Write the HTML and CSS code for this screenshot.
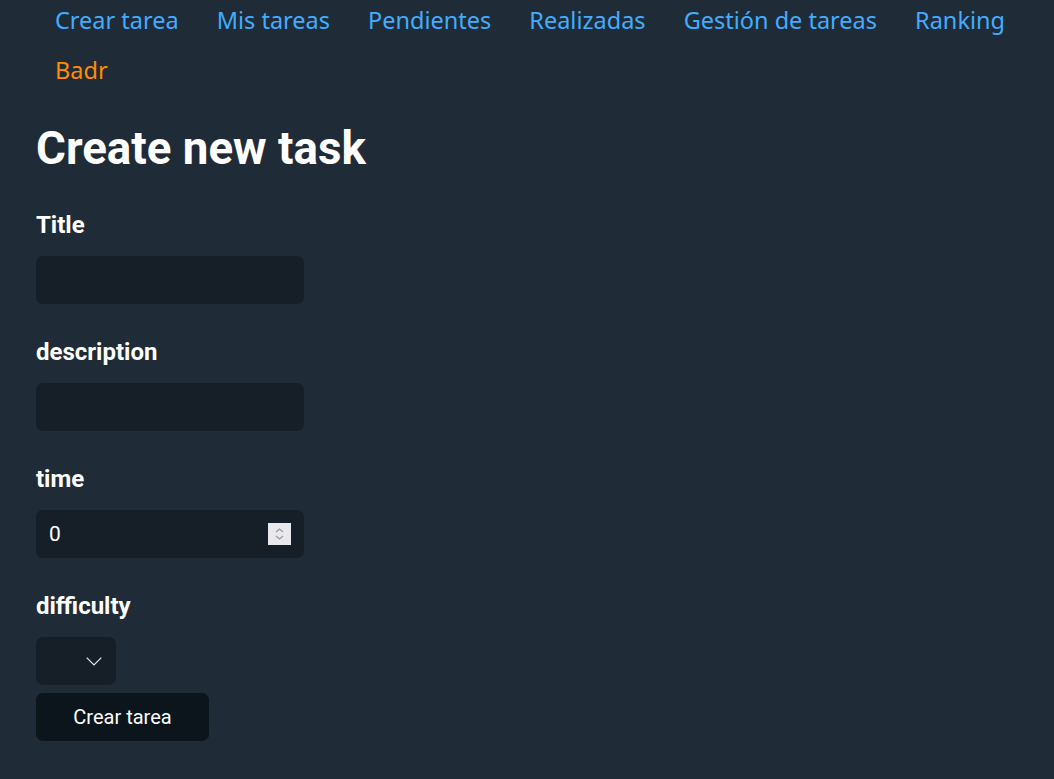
FILE: index.html
```html
<!DOCTYPE html>
<html lang="es">
<head>
<meta charset="utf-8">
<title>Create new task</title>
<link rel="stylesheet" href="styles.css">
</head>
<body>
<nav class="nav">
  <ul class="nav-list">
    <li class="nav-item"><a class="nav-link" href="#">Crear tarea</a></li>
    <li class="nav-item"><a class="nav-link" href="#">Mis tareas</a></li>
    <li class="nav-item"><a class="nav-link" href="#">Pendientes</a></li>
    <li class="nav-item"><a class="nav-link" href="#">Realizadas</a></li>
    <li class="nav-item"><a class="nav-link" href="#">Gestión de tareas</a></li>
    <li class="nav-item"><a class="nav-link" href="#">Ranking</a></li>
    <li class="nav-item"><a class="nav-link nav-user" href="#">Badr</a></li>
  </ul>
</nav>
<main class="main">
  <h1 class="title">Create new task</h1>
  <form class="form">
    <div class="field">
      <label class="label" for="title">Title</label>
      <input class="input" id="title" type="text">
    </div>
    <div class="field">
      <label class="label" for="description">description</label>
      <input class="input" id="description" type="text">
    </div>
    <div class="field">
      <label class="label" for="time">time</label>
      <div class="number-wrap">
        <input class="input input-number" id="time" type="text" value="0">
        <span class="spinner">
          <svg width="23" height="22" viewBox="0 0 23 22" aria-hidden="true">
            <rect width="23" height="22" fill="#e9e9ed"/>
            <path d="M8 9 L11.5 6 L15 9" fill="none" stroke="#9a9aa0" stroke-width="1.3"/>
            <path d="M8 13 L11.5 16 L15 13" fill="none" stroke="#9a9aa0" stroke-width="1.3"/>
          </svg>
        </span>
      </div>
    </div>
    <div class="field">
      <label class="label" for="difficulty">difficulty</label>
      <div class="select-wrap">
        <select class="select" id="difficulty">
          <option></option>
        </select>
        <svg class="chevron" width="16" height="9" viewBox="0 0 16 9" aria-hidden="true">
          <path d="M0.7 0.7 L8 8 L15.3 0.7" fill="none" stroke="#e8e8e8" stroke-width="1.2"/>
        </svg>
      </div>
    </div>
    <button class="button" type="button">Crear tarea</button>
  </form>
</main>
</body>
</html>
```
FILE: styles.css
```css
html, body {
  margin: 0;
  padding: 0;
}
body {
  background: #202b38;
  color: #ffffff;
  font-family: Roboto, "Liberation Sans", sans-serif;
  min-height: 779px;
}
.nav-list {
  list-style: none;
  margin: 0;
  padding: 0 0 0 36px;
  display: flex;
  flex-wrap: wrap;
  row-gap: 10px;
}
.nav-item {
  padding: 0 19px;
  height: 40px;
  line-height: 40px;
  font-family: "Noto Sans", "Open Sans", sans-serif;
  font-size: 23.5px;
}
.nav-link {
  color: #41adff;
  text-decoration: none;
}
.nav-user {
  color: #ff8c00;
}
.main {
  padding: 0 36px;
}
.title {
  margin: 29px 0 0 0;
  font-size: 45.7px;
  line-height: 60px;
  font-weight: 700;
}
.form {
  display: flex;
  flex-direction: column;
  align-items: flex-start;
}
.field {
  display: flex;
  flex-direction: column;
  align-items: flex-start;
  margin-top: 34px;
}
.field:first-child {
  margin-top: 32px;
}
.label {
  font-size: 24px;
  font-weight: 700;
  line-height: 28px;
  margin-bottom: 17px;
}
.input {
  box-sizing: border-box;
  width: 268px;
  height: 48px;
  border: 0;
  border-radius: 7px;
  background: #161f27;
  color: #ffffff;
  font-family: Roboto, "Liberation Sans", sans-serif;
  font-size: 21px;
  padding: 0 13px;
  margin: 0;
  outline: none;
}
.number-wrap {
  position: relative;
}
.spinner {
  position: absolute;
  top: 13px;
  left: 232px;
  width: 23px;
  height: 22px;
  display: block;
}
.spinner svg {
  display: block;
}
.select-wrap {
  position: relative;
}
.select {
  appearance: none;
  -webkit-appearance: none;
  box-sizing: border-box;
  width: 80px;
  height: 48px;
  border: 0;
  border-radius: 7px;
  background: #161f27;
  color: #ffffff;
  font-size: 21px;
  margin: 0;
  display: block;
}
.chevron {
  position: absolute;
  left: 50px;
  top: 20px;
}
.button {
  margin-top: 8px;
  box-sizing: border-box;
  width: 173px;
  height: 48px;
  border: 0;
  border-radius: 7px;
  background: #0c151c;
  color: #ffffff;
  font-family: Roboto, "Liberation Sans", sans-serif;
  font-size: 20px;
  padding: 0;
}
```
